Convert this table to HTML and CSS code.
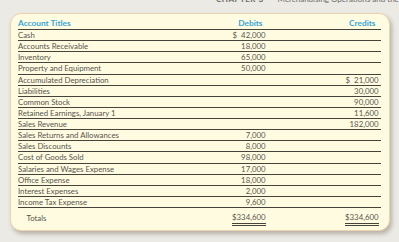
FILE: index.html
```html
<!DOCTYPE html>
<html>
<head>
<meta charset="utf-8">
<link rel="stylesheet" href="styles.css">
</head>
<body>
<div class="running-head"><span class="rh-text"><span class="rh-chap">CHAPTER 3</span>Merchandising Operations and the Multiple-Step Income Statement</span></div>
<div class="card">
  <div class="table">
    <div class="row head">
      <div class="c title">Account Titles</div>
      <div class="c num">Debits</div>
      <div class="c num">Credits</div>
    </div>
    <div class="row"><div class="c title">Cash</div><div class="c num">$&nbsp;&nbsp;42,000</div><div class="c num"></div></div>
    <div class="row"><div class="c title">Accounts Receivable</div><div class="c num">18,000</div><div class="c num"></div></div>
    <div class="row"><div class="c title">Inventory</div><div class="c num">65,000</div><div class="c num"></div></div>
    <div class="row"><div class="c title">Property and Equipment</div><div class="c num">50,000</div><div class="c num"></div></div>
    <div class="row"><div class="c title">Accumulated Depreciation</div><div class="c num"></div><div class="c num">$&nbsp;&nbsp;21,000</div></div>
    <div class="row"><div class="c title">Liabilities</div><div class="c num"></div><div class="c num">30,000</div></div>
    <div class="row"><div class="c title">Common Stock</div><div class="c num"></div><div class="c num">90,000</div></div>
    <div class="row"><div class="c title">Retained Earnings, January 1</div><div class="c num"></div><div class="c num">11,600</div></div>
    <div class="row"><div class="c title">Sales Revenue</div><div class="c num"></div><div class="c num">182,000</div></div>
    <div class="row"><div class="c title">Sales Returns and Allowances</div><div class="c num">7,000</div><div class="c num"></div></div>
    <div class="row"><div class="c title">Sales Discounts</div><div class="c num">8,000</div><div class="c num"></div></div>
    <div class="row"><div class="c title">Cost of Goods Sold</div><div class="c num">98,000</div><div class="c num"></div></div>
    <div class="row"><div class="c title">Salaries and Wages Expense</div><div class="c num">17,000</div><div class="c num"></div></div>
    <div class="row"><div class="c title">Office Expense</div><div class="c num">18,000</div><div class="c num"></div></div>
    <div class="row"><div class="c title">Interest Expenses</div><div class="c num">2,000</div><div class="c num"></div></div>
    <div class="row"><div class="c title">Income Tax Expense</div><div class="c num">9,600</div><div class="c num"></div></div>
    <div class="row total">
      <div class="c title">Totals</div>
      <div class="c num"><span class="dbl">$334,600</span></div>
      <div class="c num"><span class="dbl">$334,600</span></div>
    </div>
  </div>
</div>
</body>
</html>
```
FILE: styles.css
```css
html, body {
  margin: 0;
  padding: 0;
}
body {
  background: #ebeae4;
  font-family: Lato, "Liberation Sans", sans-serif;
  color: #57554f;
  width: 399px;
  height: 242px;
  overflow: hidden;
}
.running-head {
  height: 13px;
  overflow: hidden;
  padding-left: 216px;
  font-size: 8px;
  color: #6b6a66;
  white-space: nowrap;
}
.rh-text {
  display: block;
  margin-top: -5px;
  line-height: 8px;
}
.rh-chap {
  font-weight: bold;
  letter-spacing: 0.5px;
  margin-right: 14px;
}
.card {
  margin-left: 10px;
  width: 380px;
  height: 218px;
  box-sizing: border-box;
  background: #fffbe1;
  border: 1.5px solid #efd2b2;
  border-radius: 11px;
  box-shadow: 2px 3px 4px rgba(120, 110, 95, 0.45);
  padding: 2px 8px 0 6.5px;
}
.table {
  display: flex;
  flex-direction: column;
}
.row {
  display: grid;
  grid-template-columns: 190px 59px 113px;
  height: 11.125px;
  box-sizing: border-box;
  border-bottom: 1px solid #45433a;
  font-size: 7.8px;
  line-height: 10.5px;
}
.row.head {
  height: 14px;
  line-height: 14px;
  color: #37a6d8;
  font-weight: bold;
  font-size: 8.3px;
}
.c.title {
  padding-left: 0.5px;
}
.c.num {
  text-align: right;
  padding-right: 1px;
}
.row.head .c.num {
  padding-right: 4px;
}
.row.total {
  border-bottom: none;
  height: 18px;
  line-height: 18px;
}
.row.total .c.title {
  padding-left: 9px;
  padding-top: 1px;
}
.row.total .c.num {
  line-height: 12px;
  padding-top: 3px;
}
.dbl {
  display: inline-block;
  border-bottom: 3px double #45433a;
}
```
